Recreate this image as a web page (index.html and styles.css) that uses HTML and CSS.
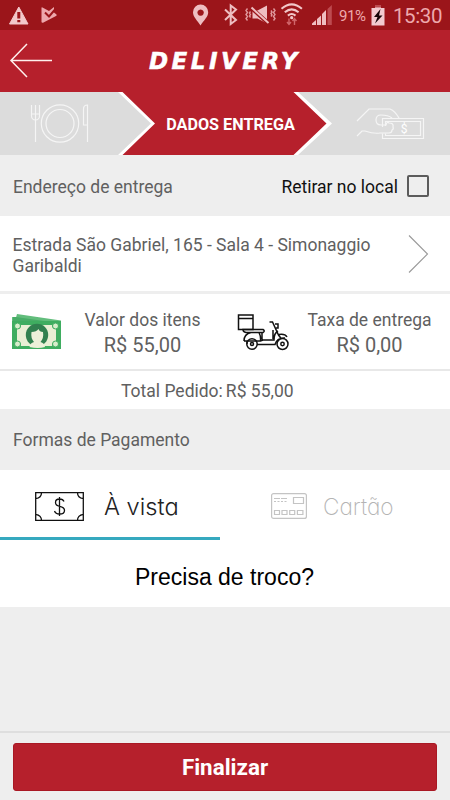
FILE: index.html
```html
<!DOCTYPE html>
<html lang="pt-BR">
<head>
<meta charset="utf-8">
<title>Delivery</title>
<link rel="stylesheet" href="styles.css">
</head>
<body>
<div class="status">
  <svg class="status-left" width="60" height="30" viewBox="0 0 60 30">
    <path d="M18.8 7 28 24H9.500Z" fill="#f3c8ca" stroke="#f3c8ca" stroke-linejoin="round"/>
    <path d="M17.300 12h3v6.500h-3zM17.300 20h3v2.300h-3z" fill="#9b151a"/>
    <path d="M41.500 8Q41.500 7 42.500 7.500L49 11l5-4 0 5.500 2.500 2Q57 15.500 56 16L43 22.800Q41.500 23 41.500 22Z" fill="#eda7ac"/>
    <path d="m45 12.500 4 4 6-7" fill="none" stroke="#9b151a" stroke-width="2"/>
  </svg>
  <svg class="status-right" width="155" height="30" viewBox="0 0 155 30">
    <path fill="#eebec1" fill-rule="evenodd" d="M12.500 25.500C9.500 20.500 5 17 5 12.200a7.600 7.600 0 0 1 15.200 0C20.200 17 15.500 20.500 12.500 25.500ZM12.600 9.400a3.200 3.200 0 1 0 .01 0Z"/>
    <path d="m37 9.500 11 10.500-5.300 4V5.500L48 9.500 37 20" fill="none" stroke="#eebec1" stroke-width="2"/>
    <path d="m59.500 8.500-1.500 2 1.500 2-1.500 2 1.500 2-1.500 2 1.500 2M62.500 11.500l-1 1.500 1 1.500-1 1.500 1 1.500M83 10.500l1 1.500-1 1.500 1 1.500-1 1.500M85.500 8.500l1.500 2-1.500 2 1.500 2-1.500 2 1.500 2-1.500 2" fill="none" stroke="#e0999d" stroke-width="1.400"/>
    <path d="M64.500 10.500h5l9.500-5V23.500l-9.500-5h-5Z" fill="#eebec1"/>
    <path d="m64.500 9 16 14.500" stroke="#9b151a" stroke-width="4"/>
    <path d="m63.500 7.500 17 15.500" stroke="#eebec1" stroke-width="2"/>
    <g fill="none" stroke="#f2c7c9" stroke-width="2.100">
      <path d="M93.500 8.700q10.200-8.800 20.400 0M96.800 12.300q6.900-5.800 13.800 0M99.900 15.600q3.800-3.200 7.600 0"/>
    </g>
    <circle cx="103.700" cy="17.700" r="1.600" fill="#f2c7c9"/>
    <path d="M101 18.500V24m-2-2 2 2.500 2-2.500M106.500 25v-6m-2 2 2-2.500 2 2.500" fill="none" stroke="#d0666b" stroke-width="1.400"/>
    <path d="M124 25v-1.500l4-3.500v5ZM129 25v-6l4-3.500V25ZM134 25V14l4-4v15Z" fill="#efbec1"/>
    <path d="M139.500 25V9l4.300-4v20Z" fill="#bd4b50"/>
  </svg>
  <span class="percent">91%</span>
  <svg class="battery" width="14" height="21" viewBox="0 0 14 21">
    <path d="M4 0h6v3h3.500v17.500H.5V3H4Z" fill="#f3cbd0"/><path d="M4 0h6v2.500H4Z" fill="#bd4b50"/>
    <path d="M9.500 4 3 12h3.500L4 18.500l7.500-8H8Z" fill="#160407"/>
  </svg>
  <span class="clock">15:30</span>
</div>
<header class="header">
  <svg width="44" height="36" viewBox="0 0 44 36"><path d="M19 1 3 17.500 19 34M3 17.500h41" fill="none" stroke="#fff0ed" stroke-width="1.500"/></svg>
  <h1>DELIVERY</h1>
</header>
<nav class="steps">
  <svg class="steps-art" width="450" height="63" viewBox="0 0 450 63">
    <path d="M0 0h450v63H0Z" fill="#dcdcdc"/>
    <path d="M118 0h180l34 31.500L298 63H118l33-31.500Z" fill="#fff"/>
    <path d="M122.500 0h171l33 31.500-33 31.500h-171l32.500-31.500Z" fill="#b6202c"/>
    <g fill="none" stroke="#f5f5f5" stroke-width="1.200">
      <path d="M31.500 13v11a4 4 0 0 0 8 0V13M35.500 13v37M31.500 22h8M87.500 50V13q-4 0-4 4v16h4"/>
      <circle cx="60" cy="31.500" r="18.700"/><circle cx="60" cy="31.500" r="14"/>
      <path d="M357 29l12-12h21q5 2 9 9M357 44l5-5h3q9 3 15 2h9q3 0 3-3 2-1 1-3 1-4-4-4-2-2-3 2h-5q-5 0-5-5 0-5 5-5 7 0 11 3"/>
      <path d="M382.500 35v-8.500h41v20h-41v-5M385.500 34v-4.500h35v14h-35v-2"/>
    </g>
    <text x="404" y="40.500" text-anchor="middle" class="hand-money">$</text>
  </svg>
  <strong>DADOS ENTREGA</strong>
</nav>
<section class="section address-title">
  <span class="t-end">Endereço de entrega</span>
  <label class="pickup"><span>Retirar no local</span><i class="box"></i></label>
</section>
<section class="address">
  <p>Estrada São Gabriel, 165 - Sala 4 - Simonaggio<br>Garibaldi</p>
  <svg width="21" height="40" viewBox="0 0 21 40"><path d="m1 1.500 18.500 18.500L1 38.500" fill="none" stroke="#9a9a9a" stroke-width="1.100"/></svg>
</section>
<section class="values">
  <svg class="cash" width="50" height="36" viewBox="0 0 50 36">
    <path d="M5 0 49 6.500V14H0V3l4 .5Z" fill="#62bd7c"/><path d="m4 3 28 4H1V3Z" fill="#48ad67"/>
    <path d="M0 7h49v28H0Z" fill="#3fad60"/>
    <path d="M9 11h31q0 4 4 4v13q-4 0-4 4H9q0-4-4-4V15q4 0 4-4Z" fill="#e9efd4"/>
    <g fill="#d8edcb" stroke="#3fad60"><circle cx="5.500" cy="12" r="3"/><circle cx="43.500" cy="12" r="3"/><circle cx="5.500" cy="30" r="3"/><circle cx="43.500" cy="30" r="3"/></g>
    <circle cx="25" cy="21" r="11.200" fill="#31804f"/>
    <path d="M17.500 33q.5-4 4.500-5-3.500-4-2.500-10 5 0 7-3 1 3 4.500 3 1 6-2.500 10 4 1 4.500 5-7 2-15.500 0Z" fill="#edf0d9"/>
  </svg>
  <div class="value items"><span class="label">Valor dos itens</span><span class="amount">R$ 55,00</span></div>
  <svg class="scooter" width="52" height="37" viewBox="0 0 52 37">
    <g fill="none" stroke="#111" stroke-width="1.500">
      <path d="M1.500 1h14.500v14.500H1.500ZM1.500 4.500H16"/>
      <path d="M6 15.500h20q2.500 1.500 0 3H9q-3-.5-3-3ZM7 27q0-7 7-8.500M22 18.500q2 4 1.500 8M7 27h16.500l2.500-1h11q0-7 4-9M10 27v3M20 30.500h18q2-7 10-6.500M25 18.500v7M32.500 8h3l6 13 3 4M36 16v9M38 10h3v4h-2M42 20.500q6-1 8 2.500"/>
      <circle cx="15" cy="30" r="5.200"/><circle cx="15" cy="30" r="1.500"/><circle cx="45.500" cy="30" r="5.500"/><circle cx="45.500" cy="30" r="1.700"/>
    </g>
  </svg>
  <div class="value fee"><span class="label">Taxa de entrega</span><span class="amount">R$ 0,00</span></div>
</section>
<section class="total"><span class="t-total">Total Pedido:</span><span class="t-sum">R$ 55,00</span></section>
<section class="section"><span class="t-forms">Formas de Pagamento</span></section>
<div class="tabs">
  <div class="tab active">
    <svg width="49" height="29" viewBox="0 0 49 29">
      <g fill="none" stroke="#111" stroke-width="1.300"><path d="M.7.700h47.600v27.600H.7ZM6.500.700q0 5-5.800 6M42.500.700q0 5 5.800 6M6.500 28.300q0-5-5.800-6M42.500 28.300q0-5 5.800-6M29 9.500q-1-2.500-4.500-2.500-4 0-4 3.500 0 3 4.200 3.900 4.800 1 4.800 4 0 3.600-5 3.600-4 0-5-3M24.500 5v19"/></g>
    </svg>
    <span>À vista</span>
  </div>
  <div class="tab">
    <svg width="36" height="26" viewBox="0 0 36 26">
      <g fill="none" stroke="#c4c4c4" stroke-width="1.200"><rect x=".6" y=".6" width="34.800" height="24.800" rx="2"/><path d="M22.500 4.500h10v6h-10ZM3.500 17.500h5v4h-5ZM11 17.500h5v4h-5ZM18.700 17.500h5v4h-5ZM26.400 17.500h5.500v4h-5.500Z"/><path d="M3 5.500h14" stroke-dasharray="6 1"/><path d="M3 8.500h14" stroke-dasharray="2 1.500"/></g>
    </svg>
    <span>Cartão</span>
  </div>
</div>
<div class="change"><span>Precisa de troco?</span></div>
<footer class="footer"><button>Finalizar</button></footer>
</body>
</html>
```
FILE: styles.css
```css
* { box-sizing: border-box; }
body {
  margin: 0;
  width: 450px;
  height: 800px;
  overflow: hidden;
  display: flex;
  flex-direction: column;
  background: #eee;
  color: #606060;
  font-family: Roboto, "Liberation Sans", sans-serif;
  font-size: 17.5px;
}
span, strong { white-space: nowrap; }
svg { flex: none; display: block; }
.status { height: 30px; flex: none; display: flex; align-items: center; background: #9b151a; color: #eda9ad; }
.status-right { margin-left: 128px; margin-right: -4px; }
.percent { width: 32px; font-size: 15px; letter-spacing: -.4px; padding-top: 2px; }
.battery { margin: 0 8px 0 0; }
.clock { font-size: 20.5px; letter-spacing: -.4px; padding-top: 2px; }
.header { height: 62px; flex: none; display: flex; padding: 13px 0 0 8px; background: #b6202c; color: #fff; }
.header h1 { margin: 0 0 0 97px; font: italic 700 23px/36px "DejaVu Sans", sans-serif; letter-spacing: 3.5px; -webkit-text-stroke: .5px #fff; }
.steps { height: 63px; flex: none; display: grid; place-items: center; }
.steps > * { grid-area: 1 / 1; }
.steps strong { margin-left: 11px; padding-top: 2px; font-size: 16.2px; font-weight: 700; color: #fff; }
.hand-money { font: 12px Roboto, sans-serif; fill: #fff; }
.section { height: 61px; flex: none; display: flex; align-items: center; padding: 1px 13px 0; }
.address-title { justify-content: space-between; padding-right: 21px; }
.t-end, .pickup span { padding-top: 1px; }
.pickup { display: flex; align-items: center; gap: 9px; color: #111; }
.box { width: 22px; height: 22px; border: 2px solid #5b5b5b; border-radius: 2px; }
.address { height: 78px; flex: none; display: flex; justify-content: space-between; padding: 18px 21px 0 12.500px; background: #fff; border-bottom: 3px solid #eee; }
.address p { margin: 1px 0 0; line-height: 20.500px; white-space: nowrap; }
.value { display: flex; flex-direction: column; align-items: center; }
.values { height: 77px; flex: none; display: flex; background: #fff; border-bottom: 2px solid #e8e8e8; }
.cash { margin: 20px 0 0 12px; }
.items { width: 161px; padding-top: 14px; }
.scooter { margin: 20px 0 0 14px; }
.fee { width: 161px; padding-top: 14px; }
.label { line-height: 24px; }
.amount { font-size: 20px; line-height: 26px; }
.total { height: 38px; flex: none; display: flex; align-items: center; gap: 3px; padding: 1px 0 0 121px; background: #fff; }
.tabs { height: 70px; flex: none; display: flex; background: #fff; }
.tab { display: flex; align-items: flex-start; width: 220px; height: 70px; padding: 22px 0 0 35px; color: #bdbdbd; font: 200 22.7px/30px Inter, sans-serif; font-feature-settings: "cv11"; }
.tab.active { border-bottom: 3px solid #35a9bf; color: #222; font-size: 23.7px; font-weight: 300; }
.tab.active span { margin-left: 20px; }
.tab:last-child { padding-left: 51px; color: #b4b4b4; }
.tab:last-child svg { margin-top: 1px; }
.tab:last-child span { margin-left: 16px; }
.change { height: 67px; flex: none; padding: 23px 0 0 135px; background: #fff; color: #000; font: 23px/28px "Liberation Sans", sans-serif; }
.footer { height: 69px; flex: none; margin-top: auto; padding: 10px 13px 10px; border-top: 2px solid #dedede; }
.footer button { display: block; width: 100%; height: 48px; padding: 0; border: 1px solid #a91824; border-radius: 3px; background: #b6202c; color: #fff; font: 700 22.4px Roboto, sans-serif; }
```
